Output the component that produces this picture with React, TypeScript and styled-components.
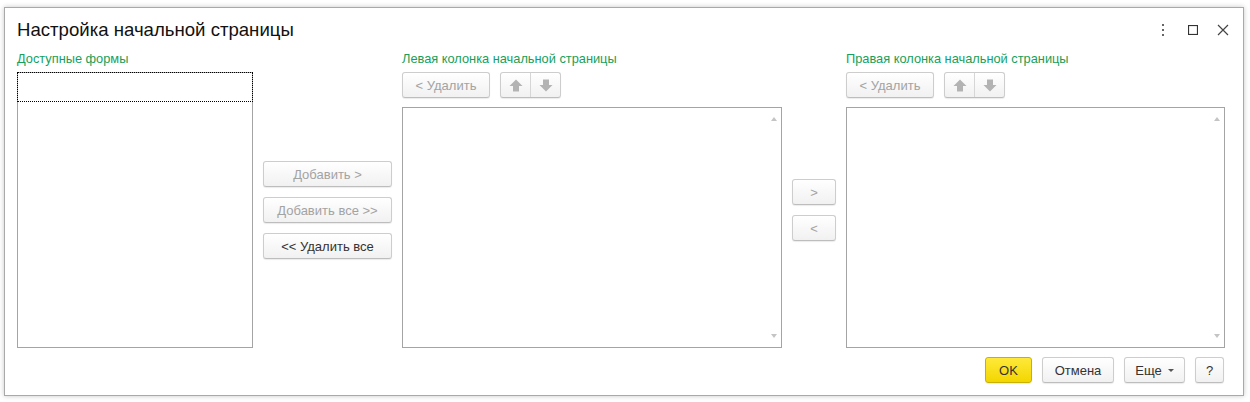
import React from 'react';
import styled, { createGlobalStyle } from 'styled-components';

const GlobalStyle = createGlobalStyle`
  html, body {
    margin: 0;
    padding: 0;
    background: #ffffff;
  }
  body {
    font-family: Arial, "Liberation Sans", sans-serif;
    color: #333;
  }
`;

const Page = styled.div`
  width: 1250px;
  height: 402px;
  padding: 7px 6px 6px 4px;
  box-sizing: border-box;
`;

const Window = styled.div`
  height: 389px;
  box-sizing: border-box;
  border: 1px solid #a9a9a9;
  background: #fff;
  box-shadow: 0 0 5px rgba(0, 0, 0, 0.22);
  display: flex;
  flex-direction: column;
  padding: 0 18px 0 12px;
`;

const TitleBar = styled.div`
  display: flex;
  align-items: center;
  justify-content: space-between;
  height: 43px;
`;

const Title = styled.h1`
  margin: 0;
  font-size: 18.6px;
  font-weight: normal;
  color: #111;
  font-family: Arial, "Liberation Sans", sans-serif;
`;

const WindowTools = styled.div`
  display: flex;
  align-items: center;
  gap: 14px;
  margin-right: -6px;
`;

const ToolIcon = styled.span`
  width: 16px;
  height: 16px;
  display: flex;
  align-items: center;
  justify-content: center;
`;

const Columns = styled.div`
  display: grid;
  grid-template-columns: 236px 129px 380px 44px 379px;
  grid-template-rows: 21px 276px;
  column-gap: 10px;
`;

const Label = styled.div`
  font-size: 12.8px;
  color: #17a05a;
  line-height: 15px;
  white-space: nowrap;
`;

const List = styled.div`
  position: relative;
  border: 1px solid #a4a4a4;
  box-sizing: border-box;
  background: #fff;
  flex: 1;
`;

const FocusRow = styled.div`
  height: 30px;
  margin: -1px -1px 0;
  border: 1px dotted #000;
  box-sizing: border-box;
`;

const ScrollArrow = styled.span<{ $down?: boolean }>`
  position: absolute;
  right: 4px;
  ${(p) => (p.$down ? 'bottom: 9px;' : 'top: 9px;')}
  width: 0;
  height: 0;
  border-left: 3px solid transparent;
  border-right: 3px solid transparent;
  ${(p) => (p.$down ? 'border-top: 4px solid #c4c4c4;' : 'border-bottom: 4px solid #c4c4c4;')}
`;

const Stack = styled.div`
  display: flex;
  flex-direction: column;
  justify-content: center;
  gap: 10px;
`;

const SidePanel = styled.div`
  display: flex;
  flex-direction: column;
  gap: 9px;
`;

const Toolbar = styled.div`
  display: flex;
  gap: 10px;
  height: 26px;
`;

const Button = styled.button<{ $disabled?: boolean; $width?: number }>`
  height: 26px;
  ${(p) => (p.$width ? `width: ${p.$width}px;` : '')}
  box-sizing: border-box;
  border: 1px solid #cdcdcd;
  border-bottom-color: #bdbdbd;
  border-radius: 3px;
  background: linear-gradient(#ffffff, #f1f1f1);
  box-shadow: 0 1px 1px rgba(0, 0, 0, 0.08);
  font-family: Arial, "Liberation Sans", sans-serif;
  font-size: 13px;
  color: ${(p) => (p.$disabled ? '#a3a3a3' : '#333')};
  padding: 0 12px;
  display: flex;
  align-items: center;
  justify-content: center;
  gap: 6px;
  cursor: default;
`;

const PrimaryButton = styled(Button)`
  background: linear-gradient(#ffe93a, #f3d600);
  border-color: #c9b100;
  color: #333;
`;

const ButtonGroup = styled.div`
  display: flex;
  height: 26px;
  border: 1px solid #cdcdcd;
  border-bottom-color: #bdbdbd;
  border-radius: 3px;
  background: linear-gradient(#ffffff, #f1f1f1);
  box-shadow: 0 1px 1px rgba(0, 0, 0, 0.08);
  box-sizing: border-box;
`;

const GroupItem = styled.span<{ $divider?: boolean }>`
  width: 29px;
  display: flex;
  align-items: center;
  justify-content: center;
  ${(p) => (p.$divider ? 'border-left: 1px solid #d6d6d6;' : '')}
`;

const Footer = styled.div`
  display: flex;
  justify-content: flex-end;
  gap: 10px;
  margin-top: 9px;
  margin-right: 1px;
`;

const Caret = styled.span`
  width: 0;
  height: 0;
  border-left: 3px solid transparent;
  border-right: 3px solid transparent;
  border-top: 3px solid #555;
`;

const ArrowIcon: React.FC<{ down?: boolean }> = ({ down }) => (
  <svg width="14" height="13" viewBox="0 0 14 13" style={{ transform: down ? 'rotate(180deg)' : undefined }}>
    <path d="M7 0.5 L13.5 7 L10 7 L10 12.5 L4 12.5 L4 7 L0.5 7 Z" fill="#b3b3b3" />
  </svg>
);

const ColumnTools: React.FC = () => (
  <Toolbar>
    <Button $disabled $width={88}>&lt; Удалить</Button>
    <ButtonGroup>
      <GroupItem><ArrowIcon /></GroupItem>
      <GroupItem $divider><ArrowIcon down /></GroupItem>
    </ButtonGroup>
  </Toolbar>
);

const App: React.FC = () => {
  return (
    <Page>
      <GlobalStyle />
      <Window>
        <TitleBar>
          <Title>Настройка начальной страницы</Title>
          <WindowTools>
            <ToolIcon>
              <svg width="4" height="12" viewBox="0 0 4 12">
                <rect x="1" y="0" width="2" height="2" fill="#666" />
                <rect x="1" y="5" width="2" height="2" fill="#666" />
                <rect x="1" y="10" width="2" height="2" fill="#666" />
              </svg>
            </ToolIcon>
            <ToolIcon>
              <svg width="10" height="10" viewBox="0 0 10 10">
                <rect x="0.5" y="0.5" width="9" height="9" fill="none" stroke="#333" strokeWidth="1.2" />
              </svg>
            </ToolIcon>
            <ToolIcon>
              <svg width="12" height="12" viewBox="0 0 12 12">
                <path d="M1 1 L11 11 M11 1 L1 11" stroke="#444" strokeWidth="1.2" />
              </svg>
            </ToolIcon>
          </WindowTools>
        </TitleBar>

        <Columns>
          <Label>Доступные формы</Label>
          <div />
          <Label>Левая колонка начальной страницы</Label>
          <div />
          <Label>Правая колонка начальной страницы</Label>

          <SidePanel>
            <List>
              <FocusRow />
            </List>
          </SidePanel>

          <Stack>
            <Button $disabled>Добавить &gt;</Button>
            <Button $disabled>Добавить все &gt;&gt;</Button>
            <Button>&lt;&lt; Удалить все</Button>
          </Stack>

          <SidePanel>
            <ColumnTools />
            <List>
              <ScrollArrow />
              <ScrollArrow $down />
            </List>
          </SidePanel>

          <Stack>
            <Button $disabled>&gt;</Button>
            <Button $disabled>&lt;</Button>
          </Stack>

          <SidePanel>
            <ColumnTools />
            <List>
              <ScrollArrow />
              <ScrollArrow $down />
            </List>
          </SidePanel>
        </Columns>

        <Footer>
          <PrimaryButton $width={47}>OK</PrimaryButton>
          <Button $width={72}>Отмена</Button>
          <Button $width={61}>Еще <Caret /></Button>
          <Button $width={29}>?</Button>
        </Footer>
      </Window>
    </Page>
  );
};

export default App;
